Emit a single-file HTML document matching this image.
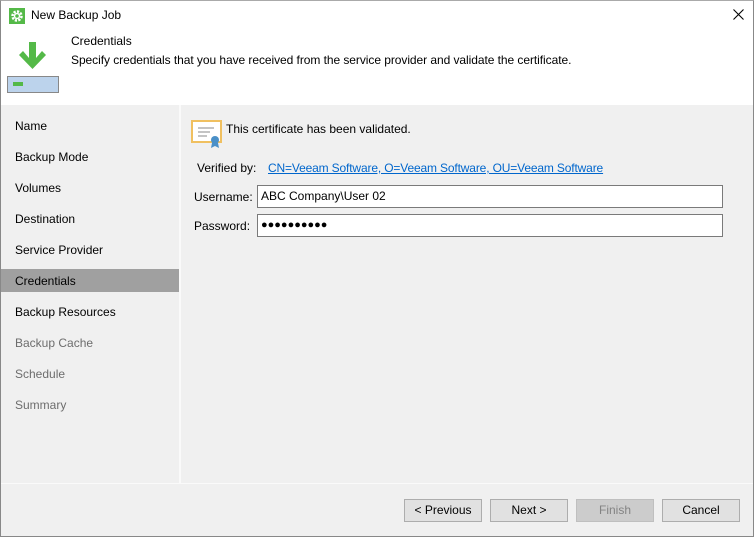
<!DOCTYPE html>
<html><head><style>
*{margin:0;padding:0;box-sizing:border-box}
body{width:754px;height:537px;overflow:hidden;font-family:"Liberation Sans",sans-serif;font-size:12px;color:#000;background:#f0f0f0;position:relative}
.win{position:absolute;left:0;top:0;width:754px;height:537px;border:1px solid #888;border-top:1px solid #aaa;z-index:10}
.title{position:absolute;left:0;top:0;width:754px;height:30px;background:#fff}
.hdr{position:absolute;left:0;top:30px;width:754px;height:75px;background:#fff}
.nav{position:absolute;left:0;top:105px;width:179px;height:378px;background:#f0f0f0}
.sep{position:absolute;left:179px;top:105px;width:2px;height:378px;background:#fafafa}
.nav div{position:absolute;left:15px;height:23px;line-height:23px}
.sel{position:absolute;left:0;top:269px;width:179px;height:23px;background:#a0a0a0}
.foot{position:absolute;left:0;top:483px;width:754px;height:1px;background:#fafafa}
.btn{position:absolute;top:499px;width:78px;height:23px;border:1px solid #adadad;background:#e1e1e1;text-align:center;line-height:21px}
.abs{position:absolute;white-space:nowrap}
.inp{position:absolute;left:257px;width:466px;height:23px;border:1px solid #7a7a7a;background:#fff;padding-left:3px;line-height:21px}
</style></head><body>
<div class="win"></div>
<div class="title">
<svg class="abs" style="left:9px;top:8px" width="16" height="16"><rect width="16" height="16" fill="#54b948"/><circle cx="8" cy="8" r="4.5" fill="none" stroke="#fff" stroke-width="2.5" stroke-dasharray="2.2 1.3"/><circle cx="8" cy="8" r="2.5" fill="none" stroke="#fff" stroke-width="1.5"/></svg>
<span class="abs" style="left:31px;top:8px;font-size:12px">New Backup Job</span>
<svg class="abs" style="left:733px;top:9px" width="11" height="11"><path d="M0.5 0.5l10 10M10.5 0.5l-10 10" stroke="#000" stroke-width="1.1"/></svg>
</div>
<div class="hdr">
<svg class="abs" style="left:18px;top:12px" width="30" height="30"><path d="M11 0h7v16l6-7 4 4-13.5 14L1 13l4-4 6 7z" fill="#54b948"/></svg>
<div class="abs" style="left:7px;top:46px;width:52px;height:17px;border:1px solid #888;background:#bcd3ec"></div>
<div class="abs" style="left:13px;top:52px;width:10px;height:4px;background:#54b948"></div>
<span class="abs" style="left:71px;top:4px">Credentials</span>
<span class="abs" style="left:71px;top:23px;letter-spacing:-0.06px">Specify credentials that you have received from the service provider and validate the certificate.</span>
</div>
<div class="nav">
<div style="top:10px">Name</div><div style="top:41px">Backup Mode</div><div style="top:72px">Volumes</div><div style="top:103px">Destination</div><div style="top:134px">Service Provider</div>
</div>
<div class="sel"></div>
<div class="nav" style="background:none">
<div style="top:165px">Credentials</div><div style="top:196px">Backup Resources</div><div style="top:227px;color:#6d6d6d">Backup Cache</div><div style="top:258px;color:#6d6d6d">Schedule</div><div style="top:289px;color:#6d6d6d">Summary</div>
</div>
<div class="sep"></div>
<svg class="abs" style="left:191px;top:120px" width="32" height="30"><rect x="1" y="1" width="29" height="21" fill="#fff" stroke="#f0c060" stroke-width="2"/><path d="M7 8h16M7 12h12M7 16h9" stroke="#888" stroke-width="1"/><circle cx="24" cy="20" r="4" fill="#4a90c8"/><path d="M21 23l-1 5 4-2 4 2-1-5" fill="#4a90c8"/></svg>
<span class="abs" style="left:226px;top:122px">This certificate has been validated.</span>
<span class="abs" style="left:197px;top:161px">Verified by:</span>
<span class="abs" style="left:268px;top:161px;color:#0066cc;text-decoration:underline;letter-spacing:-0.15px">CN=Veeam Software, O=Veeam Software, OU=Veeam Software</span>
<span class="abs" style="left:194px;top:190px">Username:</span>
<div class="inp" style="top:185px">ABC Company\User 02</div>
<span class="abs" style="left:194px;top:219px">Password:</span>
<div class="inp" style="top:214px;font-size:11px">●●●●●●●●●●</div>
<div class="foot"></div>
<div class="btn" style="left:404px">&lt; Previous</div>
<div class="btn" style="left:490px">Next &gt;</div>
<div class="btn" style="left:576px;background:#ccc;border-color:#bfbfbf;color:#838383">Finish</div>
<div class="btn" style="left:662px">Cancel</div>
</body></html>
